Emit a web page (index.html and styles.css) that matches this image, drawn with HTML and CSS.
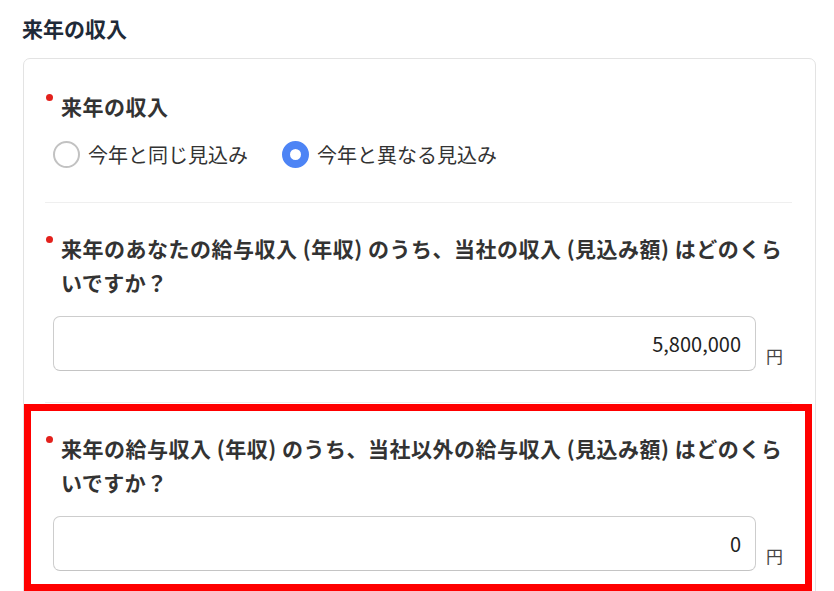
FILE: index.html
```html
<!DOCTYPE html>
<html lang="ja">
<head>
    <meta charset="utf-8">
    <title>来年の収入</title>
    <link rel="stylesheet" href="styles.css">
</head>
<body>
    <div class="page">
        <h2 class="section-title">来年の収入</h2>

        <div class="card">
            <div class="field">
                <div class="field-label"><span class="required"></span><span>来年の収入</span></div>
                <div class="radio-group">
                    <label class="radio">
                        <input type="radio" name="next-year" value="same">
                        <span>今年と同じ見込み</span>
                    </label>
                    <label class="radio">
                        <input type="radio" name="next-year" value="different" checked>
                        <span>今年と異なる見込み</span>
                    </label>
                </div>
            </div>

            <div class="field">
                <div class="field-label"><span class="required"></span><span>来年のあなたの給与収入 (年収) のうち、当社の収入 (見込み額) はどのくらいですか？</span></div>
                <div class="amount-row">
                    <input type="text" class="amount-input" value="5,800,000">
                    <span class="unit">円</span>
                </div>
            </div>

            <div class="field field-highlight">
                <div class="field-label"><span class="required"></span><span>来年の給与収入 (年収) のうち、当社以外の給与収入 (見込み額) はどのくらいですか？</span></div>
                <div class="amount-row">
                    <input type="text" class="amount-input" value="0">
                    <span class="unit">円</span>
                </div>
            </div>
        </div>
    </div>
</body>
</html>
```

FILE: styles.css
```css
body {
    margin: 0;
    background-color: #fff;
    color: #333;
    font-family: "Noto Sans CJK JP", "Noto Sans", sans-serif;
}

.page {
    padding: 13px 18px 0 23px;
}

.section-title {
    margin: 0 0 15px -1px;
    font-size: 21px;
    line-height: 30px;
    font-weight: bold;
    color: #1f2a38;
}

.card {
    border: 1px solid #e3e3e3;
    border-radius: 7px;
    padding: 2px 23px 0 21px;
    background-color: #fff;
}

.field {
    position: relative;
    padding: 28px 0 31px;
    border-bottom: 1px solid #efefef;
}

.field:last-child {
    border-bottom: none;
}

.field-label {
    display: flex;
    align-items: flex-start;
    font-size: 21px;
    line-height: 34px;
    letter-spacing: 0.5px;
    font-weight: bold;
    color: #333;
    padding-right: 4px;
}

.required {
    flex: none;
    width: 7px;
    height: 7px;
    margin: 5px 8px 0 1px;
    border-radius: 50%;
    background-color: #e3211c;
}

.radio-group {
    display: flex;
    gap: 34px;
    margin: 14px 0 0 8px;
}

.radio {
    display: flex;
    align-items: center;
    gap: 8px;
    height: 34px;
    font-size: 20px;
    color: #333;
    cursor: pointer;
}

.radio input {
    appearance: none;
    -webkit-appearance: none;
    margin: 0;
    width: 27px;
    height: 27px;
    border: 2px solid #c2c2c2;
    border-radius: 50%;
    background-color: #fff;
    box-sizing: border-box;
}

.radio input:checked {
    border: 8px solid #4d84f5;
    background-color: #fff;
}

.amount-row {
    display: flex;
    align-items: flex-end;
    gap: 10px;
    margin: 17px 0 0 8px;
}

.amount-input {
    width: 703px;
    height: 55px;
    box-sizing: border-box;
    padding: 0 14px;
    border: 1px solid #cdcdcd;
    border-bottom-color: #c4c4c4;
    border-radius: 7px;
    text-align: right;
    font-family: "Noto Sans CJK JP", "Noto Sans", sans-serif;
    font-size: 20px;
    color: #222;
    background-color: #fff;
}

.unit {
    font-size: 17px;
    line-height: 20px;
    margin-bottom: 5px;
    color: #444;
}

/* red annotation frame around the last question */
.field-highlight::after {
    content: "";
    position: absolute;
    top: 1px;
    left: -21px;
    right: -20px;
    bottom: 11px;
    border: 7px solid #ff0000;
    pointer-events: none;
}
```
